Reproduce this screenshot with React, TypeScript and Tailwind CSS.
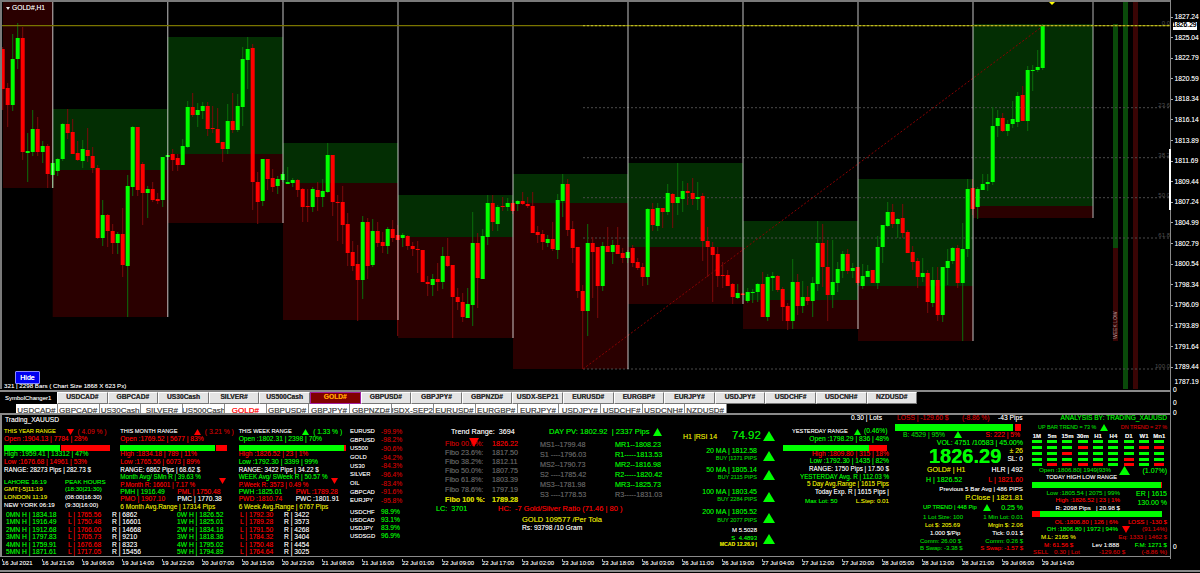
import type { ReactNode } from 'react';

const G = 'text-[#00dc00]';
const DG = 'text-[#00b400]';
const RD = 'text-[#dc0000]';
const DR = 'text-[#b00000]';
const Y = 'text-[#cccc00]';
const W = 'text-[#dedede]';
const GY = 'text-[#5a5a5a]';

// high, body top, body bottom, low, up?
const candles: number[][] = [
  [47,49,89,110,0],[83,88,105,127,0],[34,59,105,111,1],[23,38,59,69,1],[27,38,152,160,0],[133,151,153,182,1],[110,129,152,156,1],[117,129,152,156,0],[141,146,152,163,1],[144,146,174,188,0],
  [160,163,175,188,1],[158,159,171,176,1],[123,124,159,161,1],[109,124,133,139,0],[119,132,154,154,0],[141,153,160,161,0],[140,149,161,168,1],[128,150,156,162,0],[147,156,168,173,0],[165,168,238,239,0],
  [200,215,238,246,1],[214,215,231,247,0],[224,231,243,254,0],[232,234,243,254,1],[208,234,265,277,0],[175,186,266,317,1],[126,127,187,196,1],[127,127,190,196,0],[162,164,193,225,0],[186,189,193,218,1],
  [182,189,200,202,0],[193,199,201,204,0],[157,157,200,207,1],[153,155,157,160,1],[149,154,160,171,0],[154,158,165,171,0],[139,146,165,165,1],[101,107,147,148,1],[93,107,115,117,0],[103,110,115,127,1],
  [102,106,111,119,1],[102,106,129,136,0],[106,128,129,133,0],[108,129,143,143,0],[142,142,149,162,0],[104,121,149,154,1],[93,121,130,133,0],[94,106,130,132,1],[47,59,107,126,1],[37,49,60,89,1],
  [44,48,182,210,0],[172,182,202,224,0],[159,159,201,206,1],[159,159,179,190,0],[169,178,187,192,0],[176,179,186,194,1],[172,174,180,182,1],[167,182,184,184,1],[178,180,183,187,1],[179,180,190,197,0],
  [188,189,207,222,0],[189,206,207,222,0],[187,189,207,212,1],[182,190,197,211,0],[179,191,197,207,1],[143,155,192,193,1],[155,155,202,216,0],[195,202,203,241,0],[186,202,225,244,0],[213,224,253,266,0],
  [241,252,266,271,0],[245,264,280,321,0],[216,222,280,299,1],[218,222,266,279,0],[219,231,265,267,1],[222,231,243,247,0],[232,242,246,253,0],[227,229,246,254,1],[220,229,238,242,0],[225,235,240,336,0],
  [233,235,238,247,1],[235,236,246,250,0],[242,246,249,256,0],[241,249,250,273,0],[250,250,282,282,0],[276,282,284,296,0],[274,279,285,296,1],[263,279,282,291,0],[247,256,282,289,1],[238,256,266,267,0],
  [265,265,297,338,0],[288,297,302,310,0],[293,302,317,322,0],[288,304,318,318,1],[212,243,305,326,1],[233,243,278,308,0],[229,236,279,279,1],[195,203,237,245,1],[195,203,222,231,0],[205,207,224,231,1],
  [197,206,207,211,0],[198,203,207,211,1],[200,203,211,214,0],[200,201,204,211,1],[192,201,204,205,0],[197,204,206,208,0],[192,206,233,233,0],[226,232,235,243,0],[230,234,242,250,0],[235,239,243,247,1],
  [222,239,249,251,0],[194,200,250,259,1],[174,184,201,217,1],[179,184,230,236,0],[221,229,248,263,0],[247,247,291,298,0],[285,291,311,369,0],[224,243,311,336,1],[237,243,252,298,0],[247,247,286,318,0],
  [242,246,286,291,1],[227,246,252,252,0],[240,245,252,264,1],[227,245,254,254,0],[248,253,258,263,0],[250,252,258,263,1],[245,248,263,267,0],[258,262,268,270,0],[263,267,277,286,0],[208,209,277,285,1],
  [203,209,225,231,0],[203,208,226,231,1],[208,208,212,228,0],[184,193,212,215,1],[193,194,203,228,0],[163,197,203,215,1],[181,191,199,212,1],[183,191,193,205,0],[178,193,199,205,0],[182,197,199,210,1],
  [193,196,241,261,0],[227,241,247,277,0],[242,247,255,302,0],[247,254,276,287,0],[262,275,276,288,0],[270,275,286,286,0],[283,284,297,304,0],[284,293,298,299,1],[293,293.5,295,295,0],[288,292,301,303,1],
  [289,292,293,303,1],[283,284,292,302,1],[272,284,317,317,0],[274,277,317,321,1],[272,276,278,291,1],[275,276,290,292,0],[287,289,307,321,0],[303,306,321,330,0],[259,282,321,329,1],[274,282,306,315,0],
  [281,297,306,313,1],[286,297,301,305,0],[277,283,301,317,1],[221,243,284,291,1],[224,243,267,287,0],[240,267,295,321,0],[240,282,295,308,1],[262,269,283,292,1],[251,254,271,278,1],[249,254,271,274,0],
  [263,268,271,278,1],[267,267,283,285,0],[264,276,286,289,1],[265,271,277,277,1],[270,270,283,283,0],[236,247,283,289,1],[225,225,247,263,1],[202,212,226,227,1],[204,212,224,228,0],[218,219,224,238,1],
  [204,218,233,238,0],[230,232,253,253,0],[246,252,262,270,0],[258,261,277,288,0],[258,273,277,282,1],[270,273,302,313,0],[267,280,303,307,1],[267,280,315,321,0],[267,267,315,322,1],[249,261,268,285,1],
  [247,248,261,264,1],[245,248,283,288,0],[223,249,283,341,1],[179,189,249,257,1],[179,188,209,215,0],[187,189,207,219,1],[174,184,190,190,1],[174,182,184,191,1],[107,126,182,185,1],[110,118,126,137,1],
  [113,118,131,132,0],[120,124,131,136,1],[101,119,124,128,1],[92,96,122,127,1],[86,95,121,121,0],[66,70,121,131,1],[65,70,71,91,1],[50,67,70,72,1],[24,26,68,70,1],
];

// x0, x1, green top, boundary, red bottom
const zones: number[][] = [
  [3,52.7,2,2,188],[52.7,167.7,109,170,317],[167.7,283,37,154,223],[283,398,143,183,320],[398,513,195,237,338],
  [513,628,174,203,369],[628,743,163,247,304],[743,858,221,300,329],[858,973,179,286,341],[973,1093,24,206,218],
];

const fibs: [number, string][] = [[107.7,'23.6'],[157.7,'38.2'],[197.7,'50.0'],[238,'61.8'],[369,'100.0']];

const prices = ['1827.24','1825.04','1822.79','1820.59','1818.34','1816.14','1813.89','1811.69','1809.44','1807.24','1804.99','1802.79','1800.54','1798.34','1796.09','1793.89','1791.64','1789.44'];

const symbols = ['USDCAD#','GBPCAD#','US30Cash','SILVER#','US500Cash','GOLD#','GBPUSD#','GBPJPY#','GBPNZD#','USDX-SEP21','EURUSD#','EURGBP#','EURJPY#','USDJPY#','USDCHF#','USDCNH#','NZDUSD#'];

const times = ['16 Jul 2021','16 Jul 21:00','19 Jul 06:00','19 Jul 14:00','19 Jul 22:00','20 Jul 07:00','20 Jul 15:00','20 Jul 23:00','21 Jul 08:00','21 Jul 16:00','22 Jul 01:00','22 Jul 09:00','22 Jul 17:00','23 Jul 02:00','23 Jul 10:00','23 Jul 18:00','26 Jul 03:00','26 Jul 11:00','26 Jul 19:00','27 Jul 04:00','27 Jul 12:00','27 Jul 20:00','28 Jul 05:00','28 Jul 13:00','28 Jul 21:00','29 Jul 06:00','29 Jul 14:00'];

const table = [
  ['0MN H | 1834.18','L | 1765.56','R | 6862','0W H | 1826.52','L | 1792.30','R | 3422'],
  ['1MN H | 1916.49','L | 1750.48','R | 16601','1W H | 1825.01','L | 1789.28','R | 3573'],
  ['2MN H | 1912.68','L | 1766.00','R | 14668','2W H | 1834.18','L | 1791.50','R | 4268'],
  ['3MN H | 1797.83','L | 1705.73','R | 9210','3W H | 1818.36','L | 1784.32','R | 3404'],
  ['4MN H | 1759.91','L | 1676.68','R | 8323','4W H | 1795.02','L | 1750.48','R | 4454'],
  ['5MN H | 1871.61','L | 1717.05','R | 15456','5W H | 1794.89','L | 1764.64','R | 3025'],
];

const corr = [['EURUSD','-99.9%'],['GBPUSD','-98.2%'],['US500','-90.6%'],['GOLD','-94.2%'],['US30','-84.3%'],['SILVER','-96.4%'],['OIL','-83.4%'],['GBPCAD','-91.6%'],['EURJPY','-95.8%']];
const corr2 = [['USDCHF','98.9%'],['USDCAD','93.1%'],['USDJPY','83.9%'],['USDSGD','96.9%']];

const fiboRows = [
  ['Fibo 23.6%:','1817.50','h-[8.7px]'],['Fibo 38.2%:','1812.11','h-[8.7px]'],['Fibo 50.0%:','1807.75','h-[9.3px]'],['Fibo 61.8%:','1803.39','h-[9.3px]'],['Fibo 78.6%:','1797.19','h-[10px]'],
];
const pivots = [
  ['MS1--1799.48','MR1--1808.23',G],['S1 ----1796.03','R1-----1813.53',G],['MS2--1790.73','MR2--1816.98',G],['S2 ----1785.42','R2-----1820.42',G],['MS3--1781.98','MR3--1825.73',G],['S3 ----1778.53','R3-----1831.03',GY],
];

const tfs = ['1M','5m','15m','30m','H1','H4','D1','W1','Mn1'];
const matrix = ['111111111','111011100','110111111','111111011','100001010'];

function R({ className, children }: { className?: string; children?: ReactNode }) {
  return <div className={`flex items-center whitespace-nowrap ${className ?? ''}`}>{children}</div>;
}

function Tri({ down, fill, w = 7, h = 6, className }: { down?: boolean; fill: string; w?: number; h?: number; className?: string }) {
  return (
    <svg width={w} height={h} viewBox="0 0 10 10" preserveAspectRatio="none" className={`shrink-0 ${className ?? ''}`}>
      <polygon points={down ? '0,0 10,0 5,10' : '5,0 10,10 0,10'} fill={fill} />
    </svg>
  );
}

function Chart() {
  return (
    <svg width={1168} height={387} viewBox="2 2 1168 387" className="block">
      {zones.map((z, i) => (
        <g key={i}>
          {z[3] > z[2] && <rect x={z[0]} y={z[2]} width={z[1] - z[0]} height={z[3] - z[2]} fill="#032e03" />}
          <rect x={z[0]} y={z[3]} width={z[1] - z[0]} height={z[4] - z[3]} fill="#2a0000" />
        </g>
      ))}
      <rect x={1113} y={24} width={5} height={224} fill="#0a4a0a" />
      <rect x={1113} y={248} width={5} height={93} fill="#3a0505" />
      <rect x={1123} y={2} width={5} height={387} fill="#0a4a0a" />
      <rect x={1133} y={2} width={5} height={387} fill="#3a0505" />
      <text x={1117} y={339} transform="rotate(-90 1117 339)" fontSize={5} fill="#c8a0a0">WEEK LOW</text>
      {fibs.map(([y, l]) => (
        <g key={l}>
          <line x1={583} x2={1170} y1={y} y2={y} stroke="#4a4a4a" strokeWidth={1} strokeDasharray="2 2" />
          <text x={1170} y={y - 1} textAnchor="end" fontSize={6} fill="#505050">{l}</text>
        </g>
      ))}
      <line x1={583} x2={1043} y1={369} y2={26} stroke="#8c0000" strokeWidth={1} strokeDasharray="2 2" />
      {candles.map((c, i) => {
        const x = 2.7 + 5 * i;
        return (
          <g key={i}>
            <line x1={x} x2={x} y1={c[0]} y2={c[3]} stroke={c[4] ? '#0b6e0b' : '#7a0a0a'} strokeWidth={1} />
            <rect x={x - 2} y={c[1]} width={4} height={Math.max(c[2] - c[1], 1)} fill={c[4] ? '#00ff00' : '#ff0000'} />
          </g>
        );
      })}
      {zones.slice(0, 9).map((z, i) => (
        <line key={i} x1={z[1]} x2={z[1]} y1={2} y2={z[4]} stroke="#ffffff" strokeOpacity={0.55} strokeWidth={1.4} />
      ))}
      <line x1={1093} x2={1093} y1={2} y2={218} stroke="#ffffff" strokeOpacity={0.7} strokeWidth={1} />
      <line x1={2} x2={1170} y1={25.7} y2={25.7} stroke="#7a7400" strokeWidth={1.3} />
      <line x1={583} x2={1170} y1={25.7} y2={25.7} stroke="#c8c830" strokeWidth={1} strokeDasharray="2 2" />
      <text x={1170} y={24.5} textAnchor="end" fontSize={6} fill="#505050">0.0</text>
      <polygon points="1049,2 1055,2 1052,5" fill="#ffff00" />
    </svg>
  );
}

function Tabs() {
  return (
    <>
      <div className="mt-px h-[1.5px] bg-[#8a8a8a]" />
      <div className="mt-[0.5px] flex h-[11.5px] pl-[3px]">
        <div className={`flex w-[54px] items-center pl-[2px] text-[6px] ${W}`}>SymbolChanger1</div>
        {symbols.map(s => (
          <div
            key={s}
            className={
              s === 'GOLD#'
                ? 'flex w-[50.6px] items-center justify-center border border-[#a0209f] bg-[#800000] font-bold text-[#ff9a00]'
                : 'flex w-[50.6px] items-center justify-center border border-b-[#777] border-l-white border-r-[#777] border-t-white bg-[#e4e4e4] font-bold text-[#333]'
            }
          >
            {s}
          </div>
        ))}
      </div>
      <div className="flex h-[9.5px] overflow-hidden pl-[16px]">
        {symbols.map(s => (
          <div
            key={s}
            className={`flex w-[41.8px] justify-center overflow-hidden border-r border-[#888] bg-white pt-[3px] text-[8px] ${s === 'GOLD#' ? 'text-[#ff2020]' : 'text-[#555]'}`}
          >
            <span className="whitespace-nowrap">{s}</span>
          </div>
        ))}
      </div>
      <div className="h-[1.5px] bg-[#8a8a8a]" />
    </>
  );
}

function RangeRows() {
  return (
    <div className="flex h-[83px] pl-[2px]">
      <div className="w-[117px]">
        <R className="h-[7.6px]">
          <span className={`w-[62.5px] text-[5.7px] ${Y}`}>THIS YEAR RANGE</span>
          <Tri down fill="#ff0000" />
          <span className={`ml-[4px] ${DR}`}>( 4.09 % )</span>
        </R>
        <R className={`h-[7.5px] ${RD}`}>Open :1904.13 | 7784 | 28%</R>
        <div className="mt-[1.7px] flex h-[6px] w-[106px] gap-px">
          <div className="w-[56px] bg-[#00ff00]" />
          <div className="w-[49px] bg-[#ff0000]" />
        </div>
        <R className={`h-[7.5px] ${G}`}>High :1959.41 | 13312 | 47%</R>
        <R className={`h-[7.5px] ${RD}`}>Low :1676.68 | 14961 | 53%</R>
        <R className={`h-[7.5px] text-[6.3px] ${W}`}>RANGE: 28273 Pips | 282.73 $</R>
        <div className="mt-[4.3px] flex">
          <div className="w-[61px] text-[6.2px]">
            <R className={`h-[7.7px] ${G}`}>LAHORE 16:19</R>
            <R className={`h-[7.7px] ${Y}`}>GMT:[-5]11:19</R>
            <R className={`h-[7.7px] ${Y}`}>LONDON 11:19</R>
            <R className={`h-[7.7px] ${W}`}>NEW YORK 06:19</R>
          </div>
          <div className="text-[6.2px]">
            <R className={`h-[7.7px] ${G}`}>PEAK HOURS</R>
            <R className={`h-[7.7px] ${G}`}>(18:30|21:30)</R>
            <R className={`h-[7.7px] ${W}`}>(08:00|16:30)</R>
            <R className={`h-[7.7px] ${W}`}>(9:30|16:00)</R>
          </div>
        </div>
      </div>

      <div className="relative w-[119px]">
        <R className="h-[7.6px]">
          <span className={`w-[73.5px] text-[5.7px] ${W}`}>THIS MONTH RANGE</span>
          <Tri fill="#ff0000" />
          <span className={`ml-[4px] ${DR}`}>( 3.21 % )</span>
        </R>
        <R className={`h-[7.5px] ${RD}`}>Open :1769.52 | 5677 | 83%</R>
        <div className="mt-[1.7px] flex h-[6px] w-[107px] gap-px">
          <div className="w-[95px] bg-[#00ff00]" />
          <div className="w-[11px] bg-[#ff0000]" />
        </div>
        <R className={`h-[7.5px] ${RD}`}>High :1834.18 | 789 | 11%</R>
        <R className={`h-[7.5px] ${RD}`}>Low :1765.56 | 6073 | 89%</R>
        <R className={`h-[7.5px] text-[6.3px] ${W}`}>RANGE: 6862 Pips | 68.62 $</R>
        <R className={`h-[7.5px] text-[6.3px] ${G}`}>Month Avg/ SMn R | 39.63 %</R>
        <R className={`h-[7.5px] text-[6.3px] ${RD}`}>P.Month R: 16601 | 7.17 %</R>
        <R className="h-[7.5px]">
          <span className={`w-[57px] ${G}`}>PMH | 1916.49</span>
          <span className={RD}>PML | 1750.48</span>
        </R>
        <R className="h-[7.5px]">
          <span className={`w-[57px] ${RD}`}>PMO | 1907.10</span>
          <span className={W}>PMC | 1770.38</span>
        </R>
        <R className={`h-[7.5px] text-[6.5px] ${Y}`}>6 Month Avg.Range | 17314 Pips</R>
        <Tri down fill="#ff0000" className="absolute left-[99px] top-[50px]" />
      </div>

      <div className="relative w-[110px]">
        <R className="h-[7.6px]">
          <span className={`w-[63.5px] text-[5.7px] ${W}`}>THIS WEEK RANGE</span>
          <Tri fill="#00ff00" />
          <span className={`ml-[4px] ${G}`}>( 1.33 % )</span>
        </R>
        <R className={`h-[7.5px] ${G}`}>Open :1802.31 | 2398 | 70%</R>
        <div className="mt-[1.7px] flex h-[6px] w-[107px]">
          <div className="w-[105px] bg-[#00ff00]" />
          <div className="w-[2px] bg-[#ff0000]" />
        </div>
        <R className={`h-[7.5px] ${RD}`}>High :1826.52 | 23 | 1%</R>
        <R className={`h-[7.5px] ${G}`}>Low :1792.30 | 3399 | 99%</R>
        <R className={`h-[7.5px] text-[6.3px] ${W}`}>RANGE: 3422 Pips | 34.22 $</R>
        <R className={`h-[7.5px] text-[6.3px] ${G}`}>WEEK Avg/ SWeek R | 50.57 %</R>
        <R className={`h-[7.5px] text-[6.3px] ${RD}`}>P.Week R: 3573 | 0.49 %</R>
        <R className="h-[7.5px]">
          <span className={`w-[57px] ${G}`}>PWH :1825.01</span>
          <span className={RD}>PWL :1789.28</span>
        </R>
        <R className="h-[7.5px]">
          <span className={`w-[57px] ${RD}`}>PWD :1810.74</span>
          <span className={W}>PWC :1801.91</span>
        </R>
        <R className={`h-[7.5px] text-[6.5px] ${Y}`}>6 Week Avg.Range | 6767 Pips</R>
        <Tri down fill="#ff0000" className="absolute left-[92px] top-[50px]" />
      </div>
    </div>
  );
}

function PanelLeft() {
  return (
    <div className="w-[346px] shrink-0">
      <R className={`h-[11px] pl-[3px] ${W}`}>Trading_XAUUSD</R>
      <div className="h-[2.7px]" />
      <RangeRows />
      {table.map(r => (
        <R key={r[0]} className="h-[7.5px] pl-[4px]">
          <span className={`w-[62px] ${G}`}>{r[0]}</span>
          <span className={`w-[44px] ${RD}`}>{r[1]}</span>
          <span className={`w-[65px] ${W}`}>{r[2]}</span>
          <span className={`w-[63px] ${G}`}>{r[3]}</span>
          <span className={`w-[44px] ${RD}`}>{r[4]}</span>
          <span className={W}>{r[5]}</span>
        </R>
      ))}
    </div>
  );
}

function PanelCorr() {
  return (
    <div className="w-[85px] shrink-0 pl-[2px] pt-[13.1px]">
      {corr.map(c => (
        <R key={c[0]} className="h-[8.7px]">
          <span className={`w-[31px] text-[5.9px] ${W}`}>{c[0]}</span>
          <span className={DR}>{c[1]}</span>
        </R>
      ))}
      <div className="h-[2.7px]" />
      {corr2.map(c => (
        <R key={c[0]} className="h-[8px]">
          <span className={`w-[31px] text-[5.9px] ${W}`}>{c[0]}</span>
          <span className={G}>{c[1]}</span>
        </R>
      ))}
    </div>
  );
}

function PanelFibo() {
  return (
    <div className="w-[250px] shrink-0 pt-[13.5px]">
      <R className="h-[8px]">
        <span className={`ml-[18px] w-[98px] text-[7.2px] ${W}`}>Trend Range:&nbsp; 3694</span>
        <span className={`w-[103px] text-[7.6px] ${G}`}>DAY PV: 1802.92&nbsp; | 2337 Pips</span>
        <Tri fill="#00ff00" w={9} h={8} className="ml-[1px]" />
      </R>
      <div className="flex h-[68.5px] text-[7.2px]">
        <div className="relative ml-[12px] w-[95px] pt-[3.5px]">
          <R className="h-[8.7px]">
            <span className={`w-[47px] ${DR}`}>Fibo 00.0%:</span>
            <span className={RD}>1826.22</span>
          </R>
          {fiboRows.map(f => (
            <R key={f[0]} className={f[2]}>
              <span className={`w-[47px] ${GY}`}>{f[0]}</span>
              <span className={GY}>{f[1]}</span>
            </R>
          ))}
          <R className="h-[10.3px] font-bold">
            <span className={`w-[47px] ${Y}`}>Fibo 100 %:</span>
            <span className={Y}>1789.28</span>
          </R>
          <Tri down fill="#ff0000" w={10} h={9} className="absolute left-[24px] top-[2px]" />
        </div>
        <div className="pt-[4px]">
          {pivots.map(p => (
            <R key={p[0]} className="h-[10px]">
              <span className={`w-[75px] ${GY}`}>{p[0]}</span>
              <span className={p[2]}>{p[1]}</span>
            </R>
          ))}
        </div>
      </div>
      <R className="h-[8px] text-[7.2px]">
        <span className={`ml-[3px] w-[62px] ${G}`}>LC:&nbsp; 3701</span>
        <span className={`text-[7.5px] ${RD}`}>HC:&nbsp; -7 Gold/Silver Ratio (71.46 | 80 )</span>
      </R>
      <R className={`mt-[3.3px] h-[8px] pl-[89px] text-[7.5px] ${Y}`}>GOLD 109577 /Per Tola</R>
      <R className={`h-[9px] pl-[89px] ${W}`}>Rs: 93798 /10 Gram</R>
    </div>
  );
}

function PanelMa() {
  const tri = <Tri fill="#00ff00" w={12} h={10} className="ml-[6px]" />;
  return (
    <div className="w-[100px] shrink-0 pt-[15.5px] text-[7px]">
      <R className="h-[12px]">
        <span className={`w-[49px] ${Y}`}>H1 |RSI 14</span>
        <span className={`w-[25px] text-right text-[11.5px] ${G}`}>74.92</span>
        {tri}
      </R>
      <R className="mt-[4.5px] h-[18px]">
        <div className="w-[74px] text-right">
          <div className={`h-[9px] ${G}`}>20 MA | 1812.58</div>
          <div className={`h-[9px] text-[5.6px] ${DG}`}>BUY |1371 PIPS</div>
        </div>
        {tri}
      </R>
      <R className="mt-px h-[18px]">
        <div className="w-[74px] text-right">
          <div className={`h-[9px] ${G}`}>50 MA | 1805.14</div>
          <div className={`h-[9px] text-[5.6px] ${DG}`}>BUY 2115 PIPS</div>
        </div>
        {tri}
      </R>
      <R className="mt-[4.7px] h-[18px]">
        <div className="w-[74px] text-right">
          <div className={`h-[9px] ${G}`}>100 MA | 1803.45</div>
          <div className={`h-[9px] text-[5.6px] ${DG}`}>BUY 2284 PIPS</div>
        </div>
        {tri}
      </R>
      <R className="mt-[2.3px] h-[19px]">
        <div className="w-[74px] text-right">
          <div className={`h-[9.5px] ${G}`}>200 MA | 1805.52</div>
          <div className={`h-[9.5px] text-[5.6px] ${DG}`}>BUY 2077 PIPS</div>
        </div>
        {tri}
      </R>
      <R className="h-[22.5px]">
        <div className="w-[74px] text-right text-[6px]">
          <div className={`h-[7.5px] ${W}`}>M 5.5028</div>
          <div className={`h-[7.5px] ${G}`}>S&nbsp; 4.4893</div>
          <div className={`h-[7.5px] font-bold text-[5.2px] ${Y}`}>MCAD 12.26.9 |</div>
        </div>
        {tri}
      </R>
    </div>
  );
}

function PanelYesterday() {
  return (
    <div className="w-[110px] shrink-0">
      <R className={`h-[8.4px] justify-end pr-[11px] ${W}`}>0.30 | Lots</R>
      <div className="h-[5px]" />
      <div className="w-[106px]">
        <R className="h-[7.5px]">
          <span className={`w-[71px] pl-[9px] text-[5.7px] ${W}`}>YESTERDAY RANGE</span>
          <Tri fill="#00ff00" />
          <span className={`ml-[3px] ${G}`}>(0.46%)</span>
        </R>
        <R className={`h-[7.5px] justify-end ${G}`}>Open :1798.29 | 836 | 48%</R>
        <div className="mt-[1.7px] flex h-[6px]">
          <div className="w-[86px] bg-[#00ff00]" />
          <div className="w-[18px] bg-[#ff0000]" />
        </div>
        <R className={`h-[7.5px] justify-end ${RD}`}>High :1809.80 | 315 | 18%</R>
        <R className={`h-[7.5px] justify-end ${G}`}>Low :1792.30 | 1435 | 82%</R>
        <R className={`h-[7.5px] justify-end text-[6.3px] ${W}`}>RANGE: 1750 Pips | 17.50 $</R>
        <R className={`h-[7.5px] justify-end text-[6.3px] ${G}`}>YESTERDAY Avg. R | 112.03 %</R>
        <R className={`h-[7.5px] justify-end text-[6.3px] ${Y}`}>5 Day Avg.Range | 1615 Pips</R>
        <R className={`h-[7.5px] justify-end text-[6.3px] ${W}`}>Today Exp. R | 1615 Pips |</R>
        <R className="mt-[1.5px] h-[7.5px] justify-end text-[6.2px]">
          <span className={`w-[49px] ${G}`}>Max Lot: 50</span>
          <span className={`w-[35px] text-right ${Y}`}>L.Step: 0.01</span>
        </R>
      </div>
    </div>
  );
}

function PanelAccount() {
  return (
    <div className="w-[132px] shrink-0 pr-[2px]">
      <R className="h-[8.4px] pl-[4px]">
        <span className={`w-[65px] ${DR}`}>LOSS | -129.60 $</span>
        <span className={`w-[36px] ${DR}`}>(-8.86 %)</span>
        <span className={W}>-43 Pips</span>
      </R>
      <div className="ml-[2px] mt-[1.1px] flex h-[7px] w-[126px] gap-[2px]">
        <div className="w-[118px] bg-[#00ff00]" />
        <div className="w-[6px] bg-[#ff0000]" />
      </div>
      <R className="h-[8px] pl-[10px]">
        <span className={`w-[51px] ${DG}`}>B: 4529 | 95%</span>
        <Tri fill="#00ff00" w={8} h={7} />
        <span className={`ml-auto mr-[3px] ${RD}`}>S: 222 | 5%</span>
      </R>
      <R className={`h-[8px] justify-end text-[7px] ${G}`}>VOL: 4751 /10583 | 45.00%</R>
      <R className="h-[18px] pl-[36px]">
        <span className="w-[76px] text-[20px] font-bold leading-[18px] text-[#00ff00]">1826.29</span>
        <div className="flex-1 text-right">
          <div className={`h-[9px] text-[7px] ${Y}`}>± 26</div>
          <div className={`h-[8px] ${W}`}>SL: 0</div>
        </div>
      </R>
      <R className="mt-[0.5px] h-[9px] justify-between pl-[34px] text-[7px]">
        <span className={Y}>GOLD# | H1</span>
        <span className={W}>HLR | 492</span>
      </R>
      <R className="mt-px h-[9px] justify-between pl-[33px] text-[7px]">
        <span className={G}>H | 1826.52</span>
        <span className={RD}>L | 1821.60</span>
      </R>
      <R className={`mt-px h-[8px] justify-end text-[6.2px] ${W}`}>Previous 5 Bar Avg | 486 PIPS</R>
      <R className={`h-[8px] justify-end text-[7.4px] ${Y}`}>P.Close | 1821.81</R>
      <R className="mt-px h-[10px] pl-[30px]">
        <span className={`w-[60px] text-[5.8px] ${G}`}>UP TREND | 448 Pip</span>
        <Tri fill="#00ff00" w={8} h={7} />
        <span className={`ml-auto text-[7px] ${G}`}>0.25 %</span>
      </R>
      <R className="mt-px h-[8px] justify-between pl-[30px] text-[6px]">
        <span className={DG}>1 Lot Size: 100</span>
        <span className={DG}>1 Min Lot: 0.01</span>
      </R>
      <R className="h-[8px] justify-between pl-[32px] text-[6px]">
        <span className={Y}>Lot $: 205.69</span>
        <span className={Y}>Mrgin $: 2.06</span>
      </R>
      <R className="h-[7.5px] justify-between pl-[37px] text-[6px]">
        <span className={W}>1.000 $/Pip</span>
        <span className={W}>Tick: 0.01 $</span>
      </R>
      <R className="h-[7.5px] justify-between pl-[27px] text-[6px]">
        <span className={DG}>Comm: 26.00 $</span>
        <span className={DG}>Comm: 0.26 $</span>
      </R>
      <R className="h-[7.5px] justify-between pl-[27px] text-[6px]">
        <span className={DG}>B Swap: -3.38 $</span>
        <span className={RD}>S Swap: -1.57 $</span>
      </R>
    </div>
  );
}

function PanelAnalysis() {
  return (
    <div className="w-[145px] shrink-0 overflow-hidden pr-[3px]">
      <R className={`h-[8.4px] justify-end text-[6.6px] ${G}`}>ANALYSIS BY: TRADING_XAUUSD</R>
      <R className="mt-[1.1px] h-[8px] pl-[13px]">
        <span className={`w-[62px] text-[5.4px] ${DG}`}>UP BAR TREND = 73 %</span>
        <Tri fill="#00ff00" w={8} h={7} />
        <span className={`ml-auto text-[5.4px] ${DR}`}>DN TREND = 27 %</span>
      </R>
      <div className="flex h-[7.5px] pl-[4.2px] text-[6px]">
        {tfs.map(t => (
          <div key={t} className={`flex w-[15.6px] items-center justify-center font-bold ${W}`}>{t}</div>
        ))}
      </div>
      <div className="flex h-[27px] flex-col justify-between pl-[4.2px] pt-[1px]">
        {matrix.map((r, i) => (
          <div key={i} className="flex">
            {r.split('').map((v, j) => (
              <div key={j} className="flex w-[15.6px] justify-center">
                <div className={v === '1' ? 'h-[3px] w-[10px] bg-[#00ff00]' : 'h-[3px] w-[10px] bg-[#ff0000]'} />
              </div>
            ))}
          </div>
        ))}
      </div>
      <R className="h-[7.5px] pl-[14px]">
        <span className={`w-[80px] text-[6.2px] ${DG}`}>Open :1806.80| 1949|93%</span>
        <Tri fill="#00ff00" w={11} h={9} />
        <span className={`ml-auto text-[7px] ${G}`}>(1.07%)</span>
      </R>
      <R className={`h-[7px] pl-[21px] text-[5.7px] ${W}`}>TODAY HIGH LOW RANGE</R>
      <div className="mt-px flex h-[6px] w-[137px] pl-[7px]">
        <div className="flex-1 bg-[#00ff00]" />
        <div className="w-px bg-[#ff0000]" />
      </div>
      <div className="flex h-[23px] pt-[1px]">
        <div className="w-[95px] text-right text-[6.2px]">
          <R className={`h-[7.6px] justify-end ${DG}`}>Low :1805.54 | 2075 | 99%</R>
          <R className={`h-[7.6px] justify-end ${RD}`}>High :1826.52 | 23 | 1%</R>
          <R className={`h-[7.6px] justify-end ${W}`}>R: 2098 Pips&nbsp; &nbsp;| 20.98 $</R>
        </div>
        <div className={`flex-1 text-right text-[7px] ${G}`}>
          <div className="mt-[1px] h-[9px]">ER | 1615</div>
          <div className="h-[9px]">130.00 %</div>
        </div>
      </div>
      <div className="flex h-[6px] w-[137px] pl-[7px]">
        <div className="w-[8px] bg-[#ff0000]" />
        <div className="flex-1 bg-[#00ff00]" />
      </div>
      <R className="mt-px h-[7.5px] text-[6.2px]">
        <span className={`w-[93px] text-right ${RD}`}>OL :1806.80 | 126 | 6%</span>
        <span className={`ml-auto ${RD}`}>LOSS | -130 $</span>
      </R>
      <R className="h-[7.5px] text-[6.2px]">
        <span className={`w-[93px] text-right ${G}`}>OH :1806.80 | 1972 | 94%</span>
        <Tri down fill="#ff0000" w={8} h={7} className="ml-[4px]" />
        <span className={`ml-auto ${DR}`}>(91.14%)</span>
      </R>
      <R className="h-[8px] pl-[16px] text-[6.2px]">
        <span className={Y}>M.L: 2165 %</span>
        <span className={`ml-auto ${DR}`}>Eq: 1333 | 1462 $</span>
      </R>
      <R className="h-[7.5px] pl-[19px] text-[6.2px]">
        <span className={`w-[48px] ${RD}`}>M: 61.56 $</span>
        <span className={W}>Lev 1:888</span>
        <span className={`ml-auto ${G}`}>F.M: 1271 $</span>
      </R>
      <R className={`h-[7.5px] pl-[8px] text-[6.2px] ${DR}`}>
        <span className="w-[21px]">SELL</span>
        <span className="w-[45px]">0.30 | Lot</span>
        <span className="w-[41px]">-129.60 $</span>
        <span className="ml-auto">(-8.86 %)</span>
      </R>
    </div>
  );
}

export default function App() {
  return (
    <div className="h-[573px] w-[1200px] overflow-hidden bg-black font-['Liberation_Sans',Arial,sans-serif] text-[6.7px] leading-none [text-shadow:0_0_0.3px_currentColor]">
      <div className="flex h-[558.5px]">
        <div className="w-[1171px] shrink-0 border-r-[1.5px] border-[#8a8a8a]">
          <div className="h-[2px] bg-[#7a7a7a]" />
          <div className="relative h-[387px] border-l-2 border-[#7a7a7a]">
            <Chart />
            <div className={`absolute left-[4px] top-[3px] flex items-center gap-[2px] ${W}`}>
              <Tri down fill="#e8e8e8" w={4} h={3} />
              GOLD#,H1
            </div>
            <div className="absolute left-[13px] top-[369px] flex h-[13px] w-[25px] items-center justify-center rounded-[1px] border border-[#8888ff] bg-[#0000f0] text-[7px] text-white">
              Hide
            </div>
            <div className={`absolute left-[2px] top-[381px] text-[6.2px] ${W}`}>321 | 2298 Bars ( Chart Size 1868 X 623 Px)</div>
          </div>
          <Tabs />
          <div className="flex h-[142.5px] border-b-[1.5px] border-l-2 border-[#8a8a8a]">
            <PanelLeft />
            <PanelCorr />
            <PanelFibo />
            <PanelMa />
            <PanelYesterday />
            <PanelAccount />
            <PanelAnalysis />
          </div>
        </div>

        <div className={`relative flex-1 pt-[13px] ${W}`}>
          {prices.map((p, i) => (
            <div key={p} className={i === 17 ? 'flex h-[15px] items-start' : 'flex h-[20.6px] items-start'}>
              <div className="mt-[3.5px] h-px w-[2px] bg-[#aaa]" />
              <span className="ml-[1.5px] leading-[8px]">{p}</span>
            </div>
          ))}
          <div className="ml-[3.5px] leading-[8px]">1787.19</div>
          <div className="ml-[2px] mt-0 h-[8px] leading-[8px]">0</div>
          <div className="ml-[2px] mt-[5px] h-[8px] leading-[8px]">0</div>
          <div className="ml-[2px] mt-[2px] h-[8px] leading-[8px]">0</div>
          <div className="ml-[2px] mt-[126px] h-[8px] leading-[8px]">0</div>
          <div className="absolute left-[1.5px] top-[22px] flex h-[7.5px] w-[24px] items-center justify-center bg-white text-black">1826.29</div>
          <div className="absolute left-[-2px] top-[149px] h-[61px] w-[2px] bg-white" />
        </div>
      </div>
      <div className={`flex h-[11.5px] pl-[2px] text-[5.9px] ${W}`}>
        {times.map(t => (
          <div key={t} className="relative w-[40px] shrink-0 pt-[2px]">
            <div className="absolute left-[0px] top-0 h-[2px] w-px bg-[#aaa]" />
            {t}
          </div>
        ))}
      </div>
      <div className="h-[1.5px] bg-[#8a8a8a]" />
    </div>
  );
}
